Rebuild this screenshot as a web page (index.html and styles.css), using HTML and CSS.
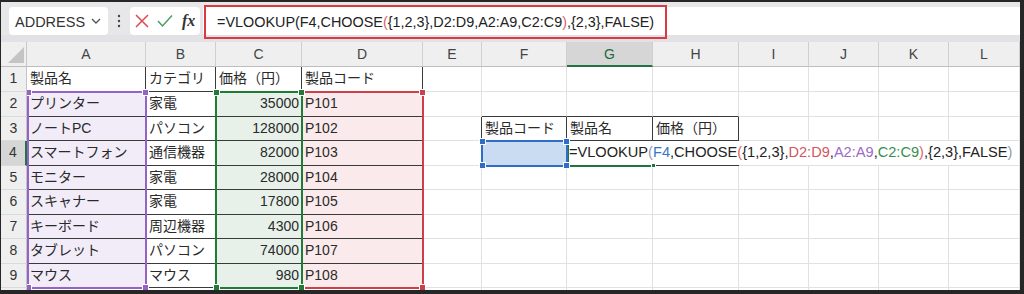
FILE: index.html
```html
<!DOCTYPE html>
<html lang="ja">
<head>
<meta charset="utf-8">
<title>Excel VLOOKUP CHOOSE</title>
<link rel="stylesheet" href="styles.css">
</head>
<body>
<div class="frame">
  <div class="fbar">
    <div class="namebox">
      <span class="nb-text">ADDRESS</span>
      <svg class="chev" width="10" height="6" viewBox="0 0 10 6"><polyline points="1,1 5,5 9,1" fill="none" stroke="#555" stroke-width="1.4"/></svg>
    </div>
    <div class="dots">
      <svg width="4" height="14" viewBox="0 0 4 14"><circle cx="2" cy="2" r="1.2" fill="#444"/><circle cx="2" cy="7" r="1.2" fill="#444"/><circle cx="2" cy="12" r="1.2" fill="#444"/></svg>
    </div>
    <div class="btnbox">
      <svg class="ico-x" width="14" height="14" viewBox="0 0 14 14"><path d="M1 1 L13 13 M13 1 L1 13" stroke="#e0484f" stroke-width="1.5" fill="none"/></svg>
      <svg class="ico-ok" width="16" height="14" viewBox="0 0 16 14"><path d="M1 7 L5.5 12 L15 1.5" stroke="#4a9e5c" stroke-width="1.5" fill="none"/></svg>
      <span class="fx">fx</span>
    </div>
    <div class="input">
      <span class="ftext">=VLOOKUP(F4,CHOOSE<span class="pk">(</span>{1,2,3},D2:D9,A2:A9,C2:C9<span class="pk">)</span>,{2,3},FALSE)</span>
    </div>
    <div class="redbox"></div>
  </div>
  <div class="sep"></div>

  <div class="sheetwrap">
    <div class="sgrid sheet">
      <!-- header -->
      <div class="corner"><svg width="26" height="24" viewBox="0 0 26 24"><polygon points="23,5 23,21 7,21" fill="#c4c4c4"/></svg></div>
      <div class="ch">A</div><div class="ch">B</div><div class="ch">C</div><div class="ch">D</div><div class="ch">E</div><div class="ch">F</div><div class="ch act">G</div><div class="ch">H</div><div class="ch">I</div><div class="ch">J</div><div class="ch">K</div><div class="ch">L</div>

      <!-- row 1 -->
      <div class="rh">1</div>
      <div class="c t">製品名</div><div class="c t">カテゴリ</div><div class="c t">価格（円）</div><div class="c t">製品コード</div>
      <div class="c"></div><div class="c"></div><div class="c"></div><div class="c"></div><div class="c"></div><div class="c"></div><div class="c"></div><div class="c"></div>

      <!-- row 2 -->
      <div class="rh">2</div>
      <div class="c t pu">プリンター</div><div class="c t">家電</div><div class="c t gr num">35000</div><div class="c t rd">P101</div>
      <div class="c"></div><div class="c tb"></div><div class="c tb"></div><div class="c tb"></div><div class="c"></div><div class="c"></div><div class="c"></div><div class="c"></div>

      <!-- row 3 -->
      <div class="rh">3</div>
      <div class="c t pu">ノートPC</div><div class="c t">パソコン</div><div class="c t gr num">128000</div><div class="c t rd">P102</div>
      <div class="c tr"></div><div class="c t">製品コード</div><div class="c t">製品名</div><div class="c t">価格（円）</div><div class="c"></div><div class="c"></div><div class="c"></div><div class="c"></div>

      <!-- row 4 -->
      <div class="rh act">4</div>
      <div class="c t pu">スマートフォン</div><div class="c t">通信機器</div><div class="c t gr num">82000</div><div class="c t rd">P103</div>
      <div class="c"></div><div class="c bl"></div>
      <div class="c edit">=VLOOKUP<span class="gp">(</span><span class="rb">F4</span>,CHOOSE<span class="pk">(</span>{1,2,3},<span class="rr">D2:D9</span>,<span class="rp">A2:A9</span>,<span class="rg">C2:C9</span><span class="pk">)</span>,{2,3},FALSE<span class="gp">)</span></div>

      <!-- row 5 -->
      <div class="rh">5</div>
      <div class="c t pu">モニター</div><div class="c t">家電</div><div class="c t gr num">28000</div><div class="c t rd">P104</div>
      <div class="c"></div><div class="c"></div><div class="c"></div><div class="c"></div><div class="c"></div><div class="c"></div><div class="c"></div><div class="c"></div>

      <!-- row 6 -->
      <div class="rh">6</div>
      <div class="c t pu">スキャナー</div><div class="c t">家電</div><div class="c t gr num">17800</div><div class="c t rd">P105</div>
      <div class="c"></div><div class="c"></div><div class="c"></div><div class="c"></div><div class="c"></div><div class="c"></div><div class="c"></div><div class="c"></div>

      <!-- row 7 -->
      <div class="rh">7</div>
      <div class="c t pu">キーボード</div><div class="c t">周辺機器</div><div class="c t gr num">4300</div><div class="c t rd">P106</div>
      <div class="c"></div><div class="c"></div><div class="c"></div><div class="c"></div><div class="c"></div><div class="c"></div><div class="c"></div><div class="c"></div>

      <!-- row 8 -->
      <div class="rh">8</div>
      <div class="c t pu">タブレット</div><div class="c t">パソコン</div><div class="c t gr num">74000</div><div class="c t rd">P107</div>
      <div class="c"></div><div class="c"></div><div class="c"></div><div class="c"></div><div class="c"></div><div class="c"></div><div class="c"></div><div class="c"></div>

      <!-- row 9 -->
      <div class="rh">9</div>
      <div class="c t pu">マウス</div><div class="c t">マウス</div><div class="c t gr num">980</div><div class="c t rd">P108</div>
      <div class="c"></div><div class="c"></div><div class="c"></div><div class="c"></div><div class="c"></div><div class="c"></div><div class="c"></div><div class="c"></div>

      <!-- row 10 (only its top edge shows) -->
      <div class="rh"></div>
      <div class="c"></div><div class="c"></div><div class="c"></div><div class="c"></div><div class="c"></div><div class="c"></div><div class="c"></div><div class="c"></div><div class="c"></div><div class="c"></div><div class="c"></div><div class="c"></div>
    </div>

    <div class="sgrid overlay">
      <div class="rng rng-d"><i class="h tr-h"></i><i class="h br-h"></i></div>
      <div class="rng rng-c"><i class="h tl-h"></i><i class="h tr-h"></i><i class="h bl-h"></i><i class="h br-h"></i></div>
      <div class="rng rng-a"><i class="h tl-h half"></i><i class="h tr-h"></i><i class="h bl-h half"></i><i class="h br-h"></i></div>
      <div class="g4"><i class="h br-h small"></i></div>
      <div class="rng rng-f"><i class="h tl-h"></i><i class="h tr-h"></i><i class="h bl-h"></i><i class="h br-h"></i></div>
      <div class="h4line"></div>
    </div>
  </div>
</div>
</body>
</html>
```

FILE: styles.css
```css
* { box-sizing: border-box; }

html, body {
  margin: 0;
  padding: 0;
  background: #262626;
  height: 294px;
  overflow: hidden;
}

body {
  font-family: "Liberation Sans", "Noto Sans CJK JP", sans-serif;
  color: #2a2a2a;
}

.frame {
  margin: 2px 0 0 1px;
  width: 1019px;
  height: 288px;
  background: #fff;
  overflow: hidden;
  display: flex;
  flex-direction: column;
}

/* ---------- formula bar ---------- */
.fbar {
  position: relative;
  height: 33px;
  flex: none;
  background: #e7e7ea;
  display: flex;
  align-items: flex-start;
  padding: 5px 0 0 8px;
}

.namebox {
  width: 99px;
  height: 28px;
  background: #fff;
  border-radius: 4px;
  display: flex;
  align-items: center;
  padding-left: 6px;
  font-size: 14.5px;
  color: #333;
}
.nb-text { line-height: 28px; padding-top: 1px; }
.chev { margin-left: auto; margin-right: 7px; }

.dots {
  width: 22px;
  height: 28px;
  display: flex;
  align-items: center;
  justify-content: center;
}

.btnbox {
  width: 70px;
  height: 28px;
  background: #fff;
  border-radius: 4px;
  display: flex;
  align-items: center;
  padding-left: 5px;
  gap: 7px;
}
.ico-ok { margin-left: 1px; }
.fx {
  font-family: "Liberation Serif", serif;
  font-style: italic;
  font-weight: bold;
  font-size: 16px;
  color: #333;
  margin-left: 2px;
  line-height: 28px;
}

.input {
  flex: 1;
  height: 28px;
  margin-left: 3px;
  background: #fff;
  border-radius: 3px 0 0 3px;
  padding-left: 14px;
  display: flex;
  align-items: center;
}
.ftext {
  font-size: 14.4px;
  color: #222;
  white-space: nowrap;
  padding-top: 1px;
}

.redbox {
  position: absolute;
  left: 203px;
  top: 3px;
  width: 463px;
  height: 34px;
  border: 2px solid #dc3a40;
  pointer-events: none;
}

.sep {
  height: 7px;
  flex: none;
  background: #e2e2e6;
}

/* ---------- sheet ---------- */
.sheetwrap {
  position: relative;
  flex: none;
}

.sgrid {
  display: grid;
  grid-template-columns: 26px 119px 70px 86px 121px 59px 85px 86px 86px 70px 70px 70px 71px;
  grid-template-rows: 25px 25px 25px 24px 25px 24px 25px 24px 25px 24px 24px;
}

.overlay {
  position: absolute;
  inset: 0;
  pointer-events: none;
}

.corner {
  background: #efefef;
  border-right: 1px solid #c8c8c8;
  border-bottom: 1px solid #bdbdbd;
}
.corner svg { display: block; }

.ch {
  background: #efefef;
  border-right: 1px solid #cfcfcf;
  border-bottom: 1px solid #bdbdbd;
  text-align: center;
  font-size: 14px;
  line-height: 24px;
  color: #444;
}
.ch.act {
  background: #d6d6d6;
  border-bottom: 2px solid #217346;
  color: #1d6b3c;
}

.rh {
  background: #efefef;
  border-right: 1px solid #c4c4c4;
  border-bottom: 1px solid #dadada;
  text-align: center;
  font-size: 14px;
  line-height: 23px;
  color: #333;
}
.rh.act {
  background: #d6d6d6;
  border-right: 2px solid #217346;
}

.c {
  border-right: 1px solid #e1e1e1;
  border-bottom: 1px solid #e1e1e1;
  padding: 0 3px;
  font-size: 14px;
  line-height: 23px;
  white-space: nowrap;
  overflow: hidden;
  color: #2a2a2a;
}
.c.t { border-right-color: #3a3a3a; border-bottom-color: #3a3a3a; }
.c.tb { border-bottom-color: #3a3a3a; }
.c.tr { border-right-color: #3a3a3a; }
.c.num { text-align: right; padding-right: 2px; }

.pu { background: #f1ecf8; }
.gr { background: #e7f1e9; }
.rd { background: #fbeaeb; }
.bl { background: #cadcf1; }

.c.edit {
  grid-column: span 6;
  background: #fff;
  padding-left: 2px;
  font-size: 14.6px;
  overflow: visible;
  color: #222;
}
.pk { color: #d9646e; }
.gp { color: #8e9aae; }
.rb { color: #3a74c6; }
.rr { color: #d4555e; }
.rp { color: #9a6bc8; }
.rg { color: #35914c; }

/* ---------- range overlays ---------- */
.rng {
  position: relative;
  border: 2px solid;
  margin: -1px -1px -1px -1px;
}
.rng-a { grid-column: 2; grid-row: 3 / 11; border-color: #9363c6; margin-left: 0; }
.rng-c { grid-column: 4; grid-row: 3 / 11; border-color: #1f7b35; }
.rng-d { grid-column: 5; grid-row: 3 / 11; border-color: #cc4049; }
.rng-f { grid-column: 7; grid-row: 5; border-color: #2f6dc6; }
.rng-a .h { background: #9363c6; }
.rng-c .h { background: #1f7b35; }
.rng-d .h { background: #cc4049; }
.rng-f .h { background: #2f6dc6; }

.g4 {
  position: relative;
  grid-column: 8;
  grid-row: 5;
  border-left: 2px solid #217346;
  border-bottom: 2px solid #217346;
  margin-bottom: -1px;
}
.g4 .h { background: #217346; }

.h4line {
  grid-column: 9;
  grid-row: 5;
  align-self: end;
  height: 1px;
  background: #3a3a3a;
}

.h {
  position: absolute;
  width: 7px;
  height: 7px;
  border: 1px solid #fff;
  display: block;
}
.tl-h { left: -4px; top: -4px; }
.tr-h { right: -4px; top: -4px; }
.bl-h { left: -4px; bottom: -4px; }
.br-h { right: -4px; bottom: -4px; }
.h.half { width: 5px; left: -2px; border-left: 0; }
.h.small { width: 5px; height: 5px; right: -3px; bottom: -3px; }
```
